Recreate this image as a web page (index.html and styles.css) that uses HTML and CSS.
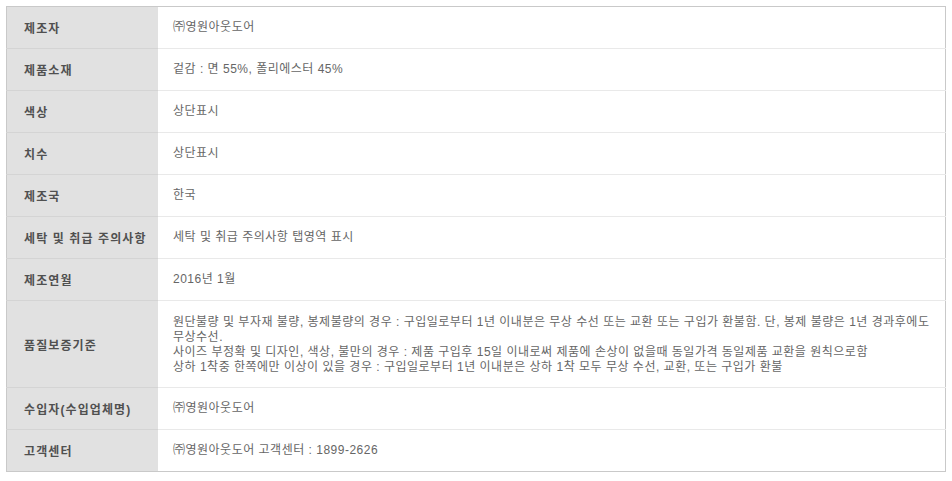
FILE: index.html
```html
<!DOCTYPE html>
<html lang="ko">
<head>
<meta charset="utf-8">
<title>상품정보</title>
<link rel="stylesheet" href="styles.css">
</head>
<body>
<table class="info">
  <tbody>
    <tr><th>제조자</th><td>㈜영원아웃도어</td></tr>
    <tr><th>제품소재</th><td>겉감 : 면 55%, 폴리에스터 45%</td></tr>
    <tr><th>색상</th><td>상단표시</td></tr>
    <tr><th>치수</th><td>상단표시</td></tr>
    <tr><th>제조국</th><td>한국</td></tr>
    <tr><th>세탁 및 취급 주의사항</th><td>세탁 및 취급 주의사항 탭영역 표시</td></tr>
    <tr><th>제조연월</th><td>2016년 1월</td></tr>
    <tr class="tall"><th>품질보증기준</th><td>원단불량 및 부자재 불량, 봉제불량의 경우 : 구입일로부터 1년 이내분은 무상 수선 또는 교환 또는 구입가 환불함. 단, 봉제 불량은 1년 경과후에도 무상수선.<br>사이즈 부정확 및 디자인, 색상, 불만의 경우 : 제품 구입후 15일 이내로써 제품에 손상이 없을때 동일가격 동일제품 교환을 원칙으로함<br>상하 1착중 한쪽에만 이상이 있을 경우 : 구입일로부터 1년 이내분은 상하 1착 모두 무상 수선, 교환, 또는 구입가 환불</td></tr>
    <tr><th>수입자(수입업체명)</th><td>㈜영원아웃도어</td></tr>
    <tr><th>고객센터</th><td>㈜영원아웃도어 고객센터 : 1899-2626</td></tr>
  </tbody>
</table>
</body>
</html>
```
FILE: styles.css
```css
html, body {
  margin: 0;
  padding: 0;
  background: #ffffff;
}
body {
  padding: 6px;
  font-family: "Liberation Sans", "Noto Sans CJK KR", sans-serif;
  font-size: 12px;
}
.info {
  width: 940px;
  border-collapse: collapse;
  border: 1px solid #c9c9c9;
  table-layout: fixed;
}
.info th {
  width: 134px;
  height: 41px;
  padding: 0 0 0 17px;
  background: #e1e1e1;
  color: #505050;
  font-weight: bold;
  letter-spacing: 1.1px;
  text-align: left;
  vertical-align: middle;
  border-top: 1px solid #d4d4d4;
  white-space: nowrap;
}
.info td {
  height: 41px;
  padding: 0 10px 0 15px;
  color: #666666;
  letter-spacing: 0.5px;
  line-height: 15px;
  vertical-align: middle;
  border-top: 1px solid #e9e9e9;
}
.info tr:first-child th,
.info tr:first-child td {
  border-top: 0;
}
.info tr.tall td {
  height: 84px;
  padding-top: 2px;
  padding-bottom: 0;
}
```
